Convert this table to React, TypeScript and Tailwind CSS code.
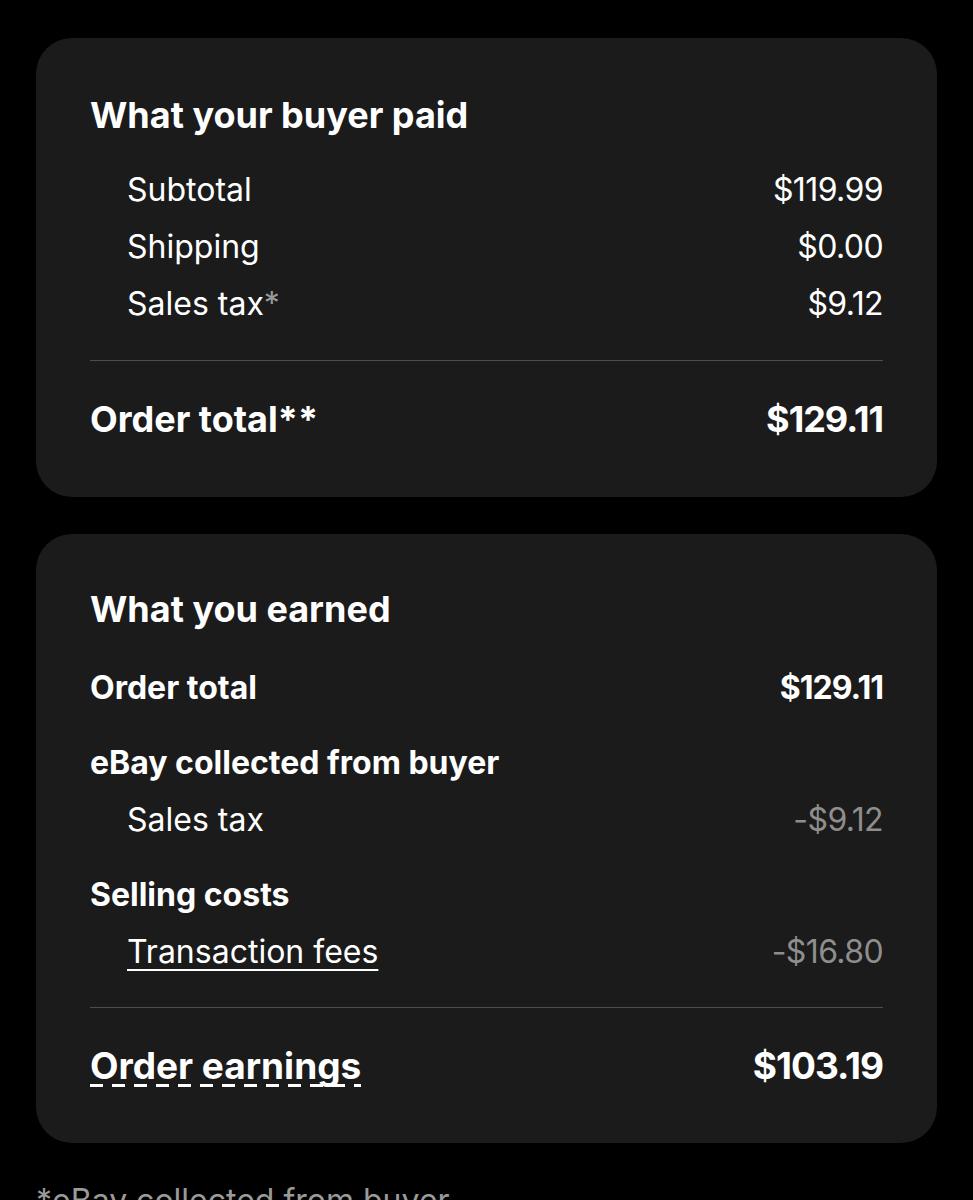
import React from 'react';

type Line = { label: React.ReactNode; value: string; muted?: boolean; link?: boolean };

const font = { fontFamily: 'Inter, "Liberation Sans", sans-serif' };

function SubRow({ label, value, muted, link }: Line) {
    return (
        <div className="flex h-[57px] items-center justify-between pl-[37px] text-[32px] leading-[57px]">
            <span className={link ? 'underline decoration-2 underline-offset-[6px]' : ''}>{label}</span>
            <span className={`tracking-[-0.6px] ${muted ? 'text-[#8e8e8e]' : 'text-white'}`}>{value}</span>
        </div>
    );
}

export default function App() {
    return (
        <div className="min-h-[1200px] overflow-hidden bg-black px-[36px] pt-[38px] text-white" style={font}>
            {/* buyer paid */}
            <div className="rounded-[36px] bg-[#1b1b1b] px-[54px] pt-[55px] pb-[48px]">
                <h2 className="text-[36px] font-bold leading-[44px]">What your buyer paid</h2>
                <div className="mt-[24px]">
                    <SubRow label="Subtotal" value="$119.99" />
                    <SubRow label="Shipping" value="$0.00" />
                    <SubRow label={<>Sales tax<span className="text-[#9a9a9a]">*</span></>} value="$9.12" />
                </div>
                <div className="mt-[28px] h-px bg-[#4d4d4d]" />
                <div className="mt-[28px] flex h-[60px] items-center justify-between text-[36px] font-bold">
                    <span>Order total**</span>
                    <span className="tracking-[-1px]">$129.11</span>
                </div>
            </div>

            {/* earned */}
            <div className="mt-[37px] rounded-[36px] bg-[#1b1b1b] px-[54px] pt-[53px] pb-[47px]">
                <h2 className="text-[36px] font-bold leading-[44px]">What you earned</h2>
                <div className="mt-[28px] flex h-[57px] items-center justify-between text-[32px] font-bold">
                    <span>Order total</span>
                    <span className="tracking-[-1px]">$129.11</span>
                </div>
                <div className="mt-[18px] flex h-[57px] items-center text-[32px] font-bold">eBay collected from buyer</div>
                <SubRow label="Sales tax" value="-$9.12" muted />
                <div className="mt-[18px] flex h-[57px] items-center text-[32px] font-bold">Selling costs</div>
                <SubRow label="Transaction fees" value="-$16.80" muted link />
                <div className="mt-[27px] h-px bg-[#4d4d4d]" />
                <div className="mt-[28px] flex h-[60px] items-center justify-between text-[37px] font-bold">
                    <span className="bg-[repeating-linear-gradient(to_right,#fff_0_13px,transparent_13px_22px)] bg-[length:100%_3px] bg-[position:left_bottom_7px] bg-no-repeat">
                        Order earnings
                    </span>
                    <span className="tracking-[-1px]">$103.19</span>
                </div>
            </div>

            <p className="mt-[36px] text-[32px] leading-[44px] text-[#9a9a9a]">*eBay collected from buyer</p>
        </div>
    );
}
